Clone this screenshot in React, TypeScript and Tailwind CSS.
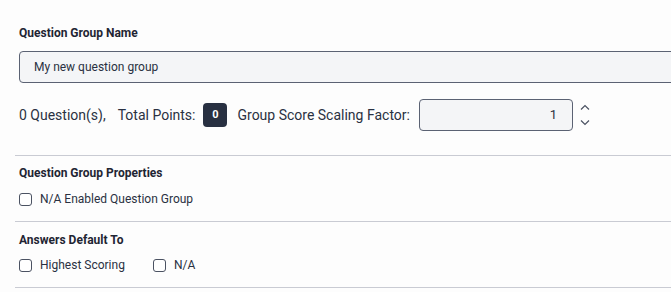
import React from 'react';

function Checkbox({ label }: { label: string }) {
    return (
        <label className="flex items-center gap-[8px] h-[16px]">
            <span className="w-[13px] h-[13px] rounded-[3px] border border-[#4b5262] bg-white" />
            <span className="text-[12px] leading-[16px] text-[#2a3142]">{label}</span>
        </label>
    );
}

export default function App() {
    return (
        <div
            className="w-full h-screen overflow-hidden bg-[#fdfdfd] text-[#2a3142]"
            style={{ fontFamily: 'Roboto, "Noto Sans", sans-serif' }}
        >
            <div className="w-[760px] pl-[15px]">
                {/* Name section */}
                <div className="pl-[4px] pt-[25px] pb-[24px]">
                    <div className="text-[12px] font-bold leading-[16px] text-[#1f2533]">Question Group Name</div>
                    <div className="mt-[10px] h-[32px] rounded-[4px] border border-[#5b6273] bg-[#f4f5f7] flex items-center pl-[14px] text-[12px]">
                        My new question group
                    </div>
                    <div className="mt-[16px] flex items-center h-[32px] text-[14px]">
                        <span>0 Question(s),</span>
                        <span className="ml-[12px]">Total Points:</span>
                        <span className="ml-[8px] w-[24px] h-[24px] rounded-[4px] bg-[#283041] text-white text-[11px] font-bold flex items-center justify-center">
                            0
                        </span>
                        <span className="ml-[10px]">Group Score Scaling Factor:</span>
                        <div className="ml-[9px] w-[154px] h-[32px] rounded-[4px] border border-[#5b6273] bg-[#f4f5f7] flex items-center justify-end pr-[15px] text-[13px]">
                            1
                        </div>
                        <svg className="ml-[6px]" width="12" height="26" viewBox="0 0 12 26" fill="none" stroke="#4b5262" strokeWidth="1.2">
                            <path d="M2 7.5 L6 3.5 L10 7.5" />
                            <path d="M2 18.5 L6 22.5 L10 18.5" />
                        </svg>
                    </div>
                </div>

                {/* Properties */}
                <div className="border-t border-[#c9cbd3] pl-[4px] pt-[9px] pb-[14px]">
                    <div className="text-[12px] font-bold leading-[16px] text-[#1f2533]">Question Group Properties</div>
                    <div className="mt-[10px]">
                        <Checkbox label="N/A Enabled Question Group" />
                    </div>
                </div>

                {/* Answers default */}
                <div className="border-t border-[#c9cbd3] pl-[4px] pt-[10px] pb-[14px]">
                    <div className="text-[12px] font-bold leading-[16px] text-[#1f2533]">Answers Default To</div>
                    <div className="mt-[9px] flex items-center gap-[28px]">
                        <Checkbox label="Highest Scoring" />
                        <Checkbox label="N/A" />
                    </div>
                </div>
                <div className="border-t border-[#c9cbd3]" />
            </div>
        </div>
    );
}
